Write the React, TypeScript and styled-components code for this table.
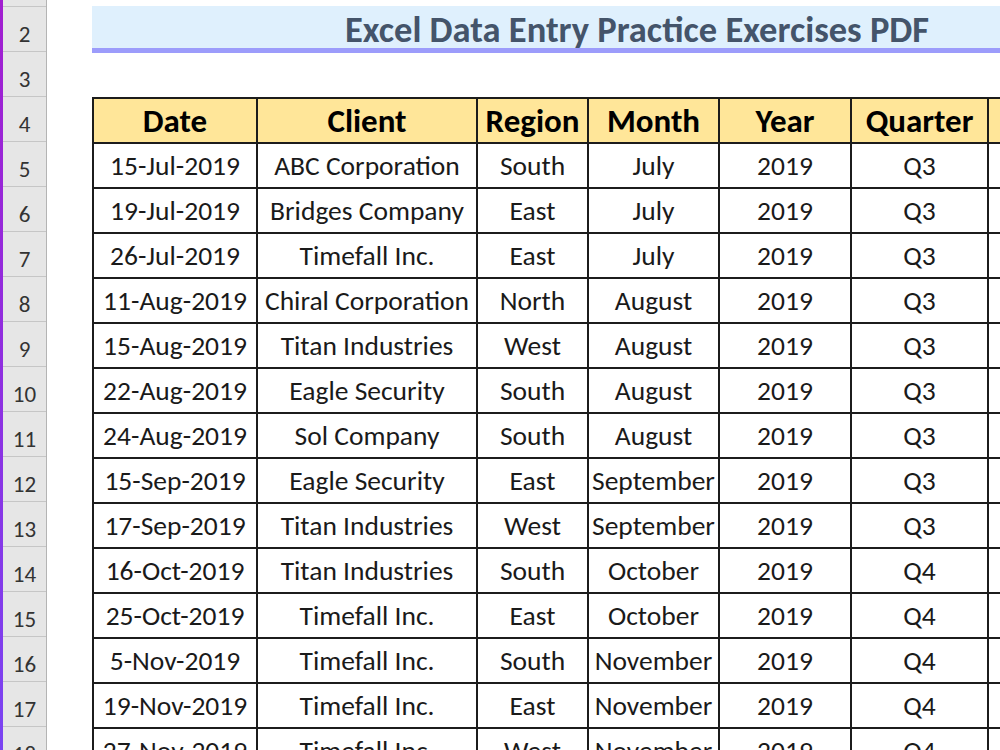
import React from "react";
import styled, { createGlobalStyle } from "styled-components";

const Global = createGlobalStyle`
  html, body { margin: 0; padding: 0; background: #ffffff; overflow: hidden; }
  body { width: 1000px; height: 750px; font-family: Carlito, "Open Sans", sans-serif; }
`;

const ROW_H = 45;

const Page = styled.div`
  display: flex;
  width: 1000px;
  height: 750px;
  overflow: hidden;
`;

const Strip = styled.div`
  width: 3px;
  flex: none;
  background: linear-gradient(180deg, #a21ed0 0%, #8f2fe0 50%, #7a44f2 100%);
`;

const RowHeaders = styled.div`
  width: 43px;
  flex: none;
  display: flex;
  flex-direction: column;
  background: #e6e6e6;
  border-right: 1px solid #b4b4b4;
`;

const RowHeader = styled.div<{ $h: number }>`
  height: ${(p) => p.$h}px;
  flex: none;
  box-sizing: border-box;
  border-bottom: 1px solid #c6c6c6;
  display: flex;
  align-items: flex-end;
  justify-content: center;
  padding-bottom: 5px;
  font-size: 23px;
  color: #333333;
  line-height: 1;
`;

const Main = styled.div`
  flex: 1;
  padding-left: 45px;
  padding-top: 6px;
  min-width: 0;
`;

const Banner = styled.div`
  height: 47px;
  box-sizing: border-box;
  background: #dff0fd;
  border-bottom: 5px solid #9c9cfb;
  display: flex;
  align-items: center;
  padding-left: 253px;
  padding-top: 6px;
  font-size: 36.5px;
  font-weight: 700;
  color: #44546a;
  white-space: nowrap;
  line-height: 1;
  overflow: hidden;
`;

const Table = styled.table`
  margin-top: 44px;
  border-collapse: collapse;
  table-layout: fixed;
  width: 1020px;
`;

const Head = styled.th`
  height: ${ROW_H}px;
  box-sizing: border-box;
  border: 2px solid #1c1c1c;
  background: #ffe699;
  font-size: 33px;
  font-weight: 700;
  color: #000000;
  text-align: center;
  padding: 0;
  white-space: nowrap;
  overflow: hidden;
`;

const Cell = styled.td`
  height: ${ROW_H}px;
  box-sizing: border-box;
  border: 2px solid #1c1c1c;
  background: #ffffff;
  font-size: 27.5px;
  color: #1a1a1a;
  text-align: center;
  padding: 0;
  white-space: nowrap;
  overflow: hidden;
`;

const widths = [164, 220, 111, 131, 132, 137, 125];
const headers = ["Date", "Client", "Region", "Month", "Year", "Quarter", ""];

const rows: string[][] = [
  ["15-Jul-2019", "ABC Corporation", "South", "July", "2019", "Q3"],
  ["19-Jul-2019", "Bridges Company", "East", "July", "2019", "Q3"],
  ["26-Jul-2019", "Timefall Inc.", "East", "July", "2019", "Q3"],
  ["11-Aug-2019", "Chiral Corporation", "North", "August", "2019", "Q3"],
  ["15-Aug-2019", "Titan Industries", "West", "August", "2019", "Q3"],
  ["22-Aug-2019", "Eagle Security", "South", "August", "2019", "Q3"],
  ["24-Aug-2019", "Sol Company", "South", "August", "2019", "Q3"],
  ["15-Sep-2019", "Eagle Security", "East", "September", "2019", "Q3"],
  ["17-Sep-2019", "Titan Industries", "West", "September", "2019", "Q3"],
  ["16-Oct-2019", "Titan Industries", "South", "October", "2019", "Q4"],
  ["25-Oct-2019", "Timefall Inc.", "East", "October", "2019", "Q4"],
  ["5-Nov-2019", "Timefall Inc.", "South", "November", "2019", "Q4"],
  ["19-Nov-2019", "Timefall Inc.", "East", "November", "2019", "Q4"],
  ["27-Nov-2019", "Timefall Inc.", "West", "November", "2019", "Q4"],
];

export default function App() {
  const labels = Array.from({ length: 17 }, (_, i) => i + 2);
  return (
    <>
      <Global />
      <Page>
        <Strip />
        <RowHeaders>
          <RowHeader $h={7} />
          {labels.map((n) => (
            <RowHeader key={n} $h={ROW_H}>
              {n}
            </RowHeader>
          ))}
        </RowHeaders>
        <Main>
          <Banner>Excel Data Entry Practice Exercises PDF</Banner>
          <Table>
            <colgroup>
              {widths.map((w, i) => (
                <col key={i} style={{ width: w }} />
              ))}
            </colgroup>
            <thead>
              <tr>
                {headers.map((h, i) => (
                  <Head key={i}>{h}</Head>
                ))}
              </tr>
            </thead>
            <tbody>
              {rows.map((r, i) => (
                <tr key={i}>
                  {r.map((c, j) => (
                    <Cell key={j}>{c}</Cell>
                  ))}
                  <Cell />
                </tr>
              ))}
            </tbody>
          </Table>
        </Main>
      </Page>
    </>
  );
}
